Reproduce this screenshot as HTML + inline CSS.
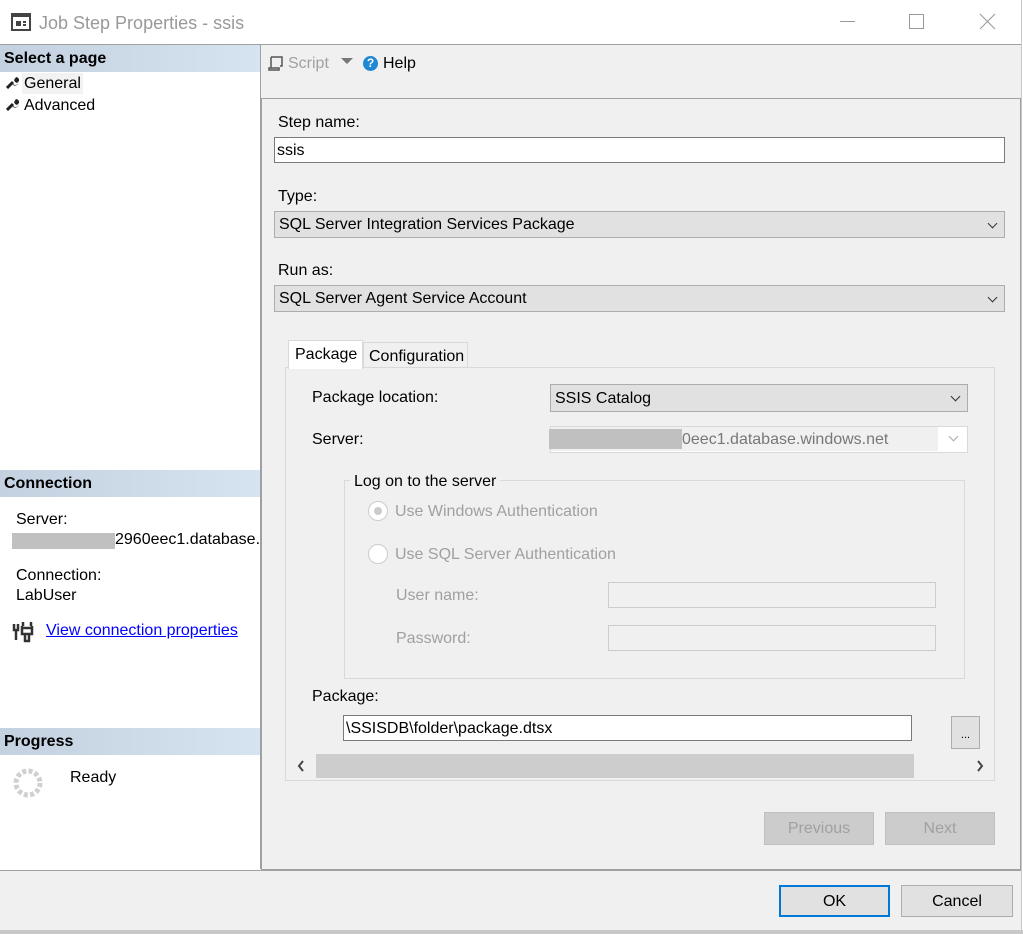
<!DOCTYPE html>
<html><head><meta charset="utf-8"><style>
*{box-sizing:border-box;margin:0;padding:0}
body{width:1023px;height:934px;background:#fff;font-family:"Liberation Sans",sans-serif;font-size:16px;color:#000;position:relative;overflow:hidden}
.a{position:absolute;white-space:nowrap}
.t{padding-top:1px}
.hdr{background:linear-gradient(to right,#c3d1e0,#d6e3f0);font-weight:bold;font-size:16px;padding-left:4px;line-height:28px}
.cb{background:#e1e1e1;border:1px solid #adadad;line-height:26px;padding-left:4px}
.chev{position:absolute;right:8px;top:8px;width:7px;height:7px;border-right:1px solid #333;border-bottom:1px solid #333;transform:rotate(45deg)}
.inp{background:#fff;border:1px solid #7a7a7a;line-height:25px;padding-left:2px}
.btn{background:#e1e1e1;border:1px solid #adadad;text-align:center}
.gray{color:#a0a0a0}
</style></head><body>
<svg class="a" style="left:11px;top:13px" width="20" height="18" viewBox="0 0 20 18"><rect x="1" y="1" width="18" height="16" fill="#fff" stroke="#444" stroke-width="2"/><rect x="1" y="1" width="18" height="3" fill="#444"/><rect x="5" y="8" width="5" height="5" fill="#444"/><rect x="12" y="8" width="3" height="2" fill="#444"/><rect x="12" y="11" width="3" height="2" fill="#444"/></svg>
<div class="a" style="left:39px;top:13px;font-size:18px;color:#999">Job Step Properties - ssis</div>
<div class="a" style="left:840px;top:21px;width:15px;height:1px;background:#999"></div>
<div class="a" style="left:909px;top:14px;width:15px;height:15px;border:1px solid #999"></div>
<svg class="a" style="left:979px;top:13px" width="17" height="17"><path d="M1 1L16 16M16 1L1 16" stroke="#999" stroke-width="1"/></svg>
<div class="a" style="left:0;top:44px;width:1021px;height:1px;background:#a0a0a0"></div>
<div class="a" style="left:1021px;top:0;width:1px;height:934px;background:#c8c8c8"></div>
<div class="a" style="left:0;top:45px;width:260px;height:824px;background:#fff"></div>
<div class="a" style="left:260px;top:45px;width:1px;height:824px;background:#a0a0a0"></div>
<div class="a hdr" style="left:0;top:45px;width:260px;height:27px">Select a page</div>
<svg class="a" style="left:6px;top:76px" width="13" height="13"><path d="M1 12L7 6" stroke="#222" stroke-width="3"/><path d="M6 7a4 4 0 1 0 4-6l-2 3 1 2 2 1 2-2a4 4 0 0 1-6 4z" fill="#222"/></svg>
<div class="a" style="left:22px;top:73px;width:61px;height:21px;background:#f2f2f2"></div>
<div class="a t" style="left:24px;top:74px">General</div>
<svg class="a" style="left:6px;top:98px" width="13" height="13"><path d="M1 12L7 6" stroke="#222" stroke-width="3"/><path d="M6 7a4 4 0 1 0 4-6l-2 3 1 2 2 1 2-2a4 4 0 0 1-6 4z" fill="#222"/></svg>
<div class="a t" style="left:24px;top:96px">Advanced</div>
<div class="a hdr" style="left:0;top:470px;width:260px;height:27px">Connection</div>
<div class="a t" style="left:16px;top:510px">Server:</div>
<div class="a" style="left:12px;top:533px;width:103px;height:16px;background:#c0c0c0"></div>
<div class="a t" style="left:115px;top:530px">2960eec1.database.</div>
<div class="a t" style="left:16px;top:566px">Connection:</div>
<div class="a t" style="left:16px;top:586px">LabUser</div>
<svg class="a" style="left:12px;top:621px" width="24" height="22"><path d="M2 3v6h4v-6M4 9v10M10 5v2h10v-2M11 1v4M19 1v4M10 7h10v6h-10zM13 13v7h4v-7" stroke="#333" stroke-width="2.5" fill="none"/></svg>
<div class="a t" style="left:46px;top:621px;color:#0000ff;text-decoration:underline">View connection properties</div>
<div class="a hdr" style="left:0;top:728px;width:260px;height:27px">Progress</div>
<svg class="a" style="left:12px;top:767px" width="32" height="32"><circle cx="16" cy="16" r="12" fill="none" stroke="#d0d0d0" stroke-width="5" stroke-dasharray="4 2.3"/></svg>
<div class="a t" style="left:70px;top:768px">Ready</div>
<div class="a" style="left:261px;top:45px;width:760px;height:824px;background:#f0f0f0"></div>
<div class="a" style="left:261px;top:98px;width:760px;height:772px;border:1px solid #a0a0a0"></div>
<svg class="a" style="left:268px;top:55px" width="16" height="16"><path d="M3 2h11v9h-2M3 2v11h8M1 13h10v2h-10z" stroke="#555" stroke-width="1.5" fill="none"/></svg>
<div class="a t" style="left:288px;top:54px;color:#a0a0a0">Script</div>
<svg class="a" style="left:341px;top:58px" width="12" height="8"><path d="M0 0h12l-6 6z" fill="#777"/></svg>
<div class="a" style="left:363px;top:56px;width:15px;height:15px;border-radius:50%;background:#1e88d4;color:#fff;font-size:12px;font-weight:bold;text-align:center;line-height:15px">?</div>
<div class="a t" style="left:383px;top:54px">Help</div>
<div class="a t" style="left:278px;top:113px">Step name:</div>
<div class="a inp" style="left:274px;top:137px;width:731px;height:26px">ssis</div>
<div class="a t" style="left:278px;top:187px">Type:</div>
<div class="a cb" style="left:274px;top:211px;width:731px;height:27px">SQL Server Integration Services Package<span class="chev"></span></div>
<div class="a t" style="left:278px;top:261px">Run as:</div>
<div class="a cb" style="left:274px;top:285px;width:731px;height:27px">SQL Server Agent Service Account<span class="chev"></span></div>
<div class="a" style="left:285px;top:367px;width:710px;height:414px;border:1px solid #d9d9d9;background:#f0f0f0"></div>
<div class="a" style="left:288px;top:340px;width:75px;height:29px;background:#fff;border:1px solid #d9d9d9;border-bottom:none;padding:5px 0 0 6px">Package</div>
<div class="a" style="left:363px;top:342px;width:105px;height:25px;border:1px solid #d9d9d9;border-bottom:none;padding:5px 0 0 5px">Configuration</div>
<div class="a t" style="left:312px;top:388px">Package location:</div>
<div class="a cb" style="left:550px;top:384px;width:418px;height:28px;line-height:27px">SSIS Catalog<span class="chev"></span></div>
<div class="a t" style="left:312px;top:430px">Server:</div>
<div class="a" style="left:550px;top:426px;width:418px;height:27px;border:1px solid #d9d9d9;background:#fff"></div>
<div class="a" style="left:551px;top:427px;width:387px;height:24px;background:#f0f0f0"></div>
<div class="a" style="left:549px;top:429px;width:133px;height:20px;background:#c0c0c0"></div>
<div class="a t" style="left:682px;top:430px;color:#777;overflow:hidden;width:250px">0eec1.database.windows.net</div>
<span class="a chev" style="left:950px;top:433px;border-color:#aaa"></span>
<div class="a" style="left:344px;top:480px;width:621px;height:199px;border:1px solid #d9d9d9"></div>
<div class="a t" style="left:350px;top:472px;background:#f0f0f0;padding:1px 4px 0">Log on to the server</div>
<div class="a" style="left:368px;top:501px;width:20px;height:20px;border-radius:50%;border:1px solid #ccc;background:#fff"></div>
<div class="a" style="left:374px;top:507px;width:8px;height:8px;border-radius:50%;background:#ccc"></div>
<div class="a gray t" style="left:395px;top:502px">Use Windows Authentication</div>
<div class="a" style="left:368px;top:544px;width:20px;height:20px;border-radius:50%;border:1px solid #ccc;background:#fff"></div>
<div class="a gray t" style="left:395px;top:545px">Use SQL Server Authentication</div>
<div class="a gray t" style="left:396px;top:586px">User name:</div>
<div class="a" style="left:608px;top:582px;width:328px;height:26px;border:1px solid #ccc"></div>
<div class="a gray t" style="left:396px;top:629px">Password:</div>
<div class="a" style="left:608px;top:625px;width:328px;height:26px;border:1px solid #ccc"></div>
<div class="a t" style="left:312px;top:687px">Package:</div>
<div class="a inp" style="left:343px;top:715px;width:569px;height:26px">\SSISDB\folder\package.dtsx</div>
<div class="a btn" style="left:951px;top:716px;width:29px;height:33px;font-size:11px;line-height:36px">...</div>
<div class="a" style="left:287px;top:753px;width:707px;height:26px;background:#f0f0f0"></div>
<div class="a" style="left:316px;top:754px;width:598px;height:24px;background:#cdcdcd"></div>
<svg class="a" style="left:297px;top:760px" width="8" height="12"><path d="M6 1L2 6l4 5" stroke="#444" stroke-width="2" fill="none"/></svg>
<svg class="a" style="left:976px;top:760px" width="8" height="12"><path d="M2 1l4 5-4 5" stroke="#444" stroke-width="2" fill="none"/></svg>
<div class="a" style="left:764px;top:812px;width:110px;height:33px;background:#ccc;border:1px solid #bfbfbf;color:#a0a0a0;text-align:center;line-height:32px">Previous</div>
<div class="a" style="left:885px;top:812px;width:110px;height:33px;background:#ccc;border:1px solid #bfbfbf;color:#a0a0a0;text-align:center;line-height:32px">Next</div>
<div class="a" style="left:0;top:870px;width:1021px;height:60px;background:#f0f0f0;border-top:1px solid #a0a0a0"></div>
<div class="a" style="left:0;top:930px;width:1023px;height:4px;background:#c8c8c8"></div>
<div class="a btn" style="left:779px;top:885px;width:111px;height:32px;border:2px solid #0078d7;line-height:30px">OK</div>
<div class="a btn" style="left:901px;top:885px;width:112px;height:32px;line-height:31px">Cancel</div>
</body></html>
